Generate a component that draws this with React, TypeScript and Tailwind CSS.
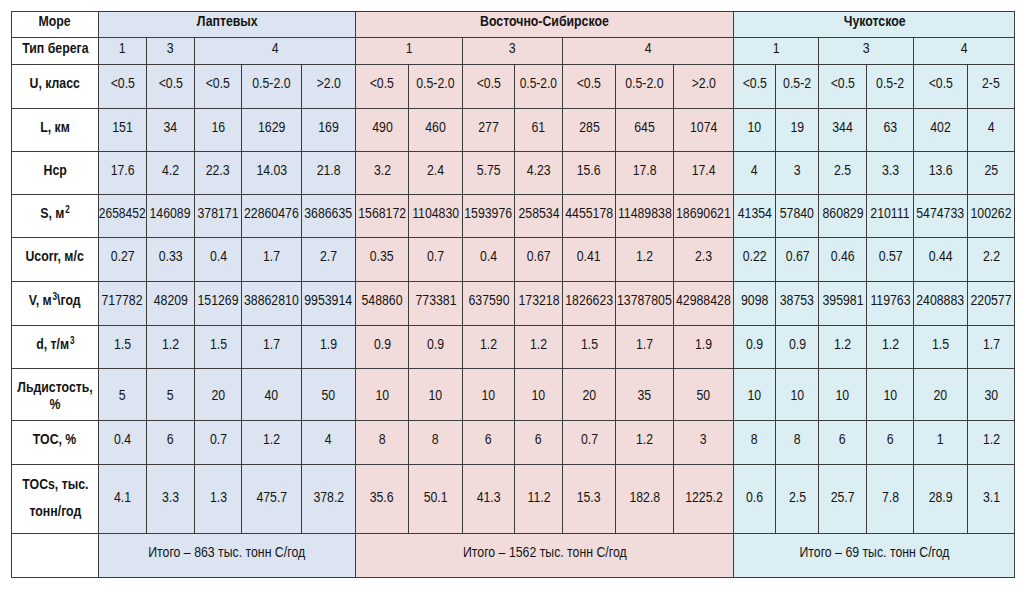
import React from "react";

type Sea = {
  name: string;
  bg: string;
  types: { label: string; span: number }[];
  widths: number[];
  total: string;
};

const seas: Sea[] = [
  {
    name: "Лаптевых",
    bg: "bg-[#dbe4f0]",
    types: [
      { label: "1", span: 1 },
      { label: "3", span: 1 },
      { label: "4", span: 3 },
    ],
    widths: [48, 48, 47, 60, 54],
    total: "Итого – 863 тыс. тонн С/год",
  },
  {
    name: "Восточно-Сибирское",
    bg: "bg-[#f2dcdb]",
    types: [
      { label: "1", span: 2 },
      { label: "3", span: 2 },
      { label: "4", span: 3 },
    ],
    widths: [53, 54, 52, 48, 53, 58, 60],
    total: "Итого – 1562 тыс. тонн С/год",
  },
  {
    name: "Чукотское",
    bg: "bg-[#daeef3]",
    types: [
      { label: "1", span: 2 },
      { label: "3", span: 2 },
      { label: "4", span: 2 },
    ],
    widths: [42, 43, 48, 47, 54, 47],
    total: "Итого – 69 тыс. тонн С/год",
  },
];

type Row = { label: React.ReactNode; h: string; pad?: string; values: string[][] };

const sup = "text-[10px] relative -top-[5px] ml-[1px]";

const rows: Row[] = [
  {
    label: "U, класс",
    h: "h-[44px]",
    values: [
      ["<0.5", "<0.5", "<0.5", "0.5-2.0", ">2.0"],
      ["<0.5", "0.5-2.0", "<0.5", "0.5-2.0", "<0.5", "0.5-2.0", ">2.0"],
      ["<0.5", "0.5-2", "<0.5", "0.5-2", "<0.5", "2-5"],
    ],
  },
  {
    label: "L, км",
    h: "h-[43px]",
    values: [
      ["151", "34", "16", "1629", "169"],
      ["490", "460", "277", "61", "285", "645", "1074"],
      ["10", "19", "344", "63", "402", "4"],
    ],
  },
  {
    label: "Hср",
    h: "h-[43px]",
    values: [
      ["17.6", "4.2", "22.3", "14.03", "21.8"],
      ["3.2", "2.4", "5.75", "4.23", "15.6", "17.8", "17.4"],
      ["4", "3", "2.5", "3.3", "13.6", "25"],
    ],
  },
  {
    label: (
      <>
        S, м<sup className={sup}>2</sup>
      </>
    ),
    h: "h-[43px]",
    values: [
      ["2658452", "146089", "378171", "22860476", "3686635"],
      ["1568172", "1104830", "1593976", "258534", "4455178", "11489838", "18690621"],
      ["41354", "57840", "860829", "210111", "5474733", "100262"],
    ],
  },
  {
    label: "Ucorr, м/с",
    h: "h-[44px]",
    values: [
      ["0.27", "0.33", "0.4", "1.7", "2.7"],
      ["0.35", "0.7", "0.4", "0.67", "0.41", "1.2", "2.3"],
      ["0.22", "0.67", "0.46", "0.57", "0.44", "2.2"],
    ],
  },
  {
    label: (
      <>
        V, м<sup className={sup}>3</sup>\год
      </>
    ),
    h: "h-[44px]",
    values: [
      ["717782", "48209", "151269", "38862810", "9953914"],
      ["548860", "773381", "637590", "173218", "1826623", "13787805", "42988428"],
      ["9098", "38753", "395981", "119763", "2408883", "220577"],
    ],
  },
  {
    label: (
      <>
        d, т/м<sup className={sup}>3</sup>
      </>
    ),
    h: "h-[43px]",
    values: [
      ["1.5", "1.2", "1.5", "1.7", "1.9"],
      ["0.9", "0.9", "1.2", "1.2", "1.5", "1.7", "1.9"],
      ["0.9", "0.9", "1.2", "1.2", "1.5", "1.7"],
    ],
  },
  {
    label: (
      <span className="block leading-[17px]">
        Льдистость,
        <br />%
      </span>
    ),
    h: "h-[52px]",
    pad: "pb-0",
    values: [
      ["5", "5", "20", "40", "50"],
      ["10", "10", "10", "10", "20", "35", "50"],
      ["10", "10", "10", "10", "20", "30"],
    ],
  },
  {
    label: "TOC, %",
    h: "h-[44px]",
    values: [
      ["0.4", "6", "0.7", "1.2", "4"],
      ["8", "8", "6", "6", "0.7", "1.2", "3"],
      ["8", "8", "6", "6", "1", "1.2"],
    ],
  },
  {
    label: (
      <span className="block leading-[27px]">
        TOCs, тыс.
        <br />
        тонн/год
      </span>
    ),
    h: "h-[69px]",
    pad: "pb-[5px]",
    values: [
      ["4.1", "3.3", "1.3", "475.7", "378.2"],
      ["35.6", "50.1", "41.3", "11.2", "15.3", "182.8", "1225.2"],
      ["0.6", "2.5", "25.7", "7.8", "28.9", "3.1"],
    ],
  },
];

const cell = "border border-[#3c3c3c] text-center align-middle p-0 whitespace-nowrap";

// Arial Narrow look: Liberation Sans squeezed horizontally, centred even when wider than the cell
function Narrow({ children, tight }: { children: React.ReactNode; tight?: boolean }) {
  return (
    <div className="flex justify-center">
      <span className={`shrink-0 inline-block origin-center ${tight ? "scale-x-[0.8]" : "scale-x-[0.82]"}`}>
        {children}
      </span>
    </div>
  );
}

const fits = (v: string, w: number) => v.length * 6.85 <= w - 2;

export default function App() {
  return (
    <div
      className="w-[1024px] h-[591px] bg-white pt-[11px] pl-[11px] text-[#141414] text-[15px] leading-[18px]"
      style={{ fontFamily: '"Liberation Sans", Arial, sans-serif' }}
    >
      <table className="table-fixed border-collapse w-[1003px]">
        <colgroup>
          <col className="w-[87px]" />
          {seas.map((s) =>
            s.widths.map((w, i) => <col key={s.name + i} style={{ width: w }} />)
          )}
        </colgroup>
        <tbody>
          <tr className="h-[26px]">
            <td className={`${cell} pb-[7px] font-bold bg-white`}>
              <Narrow>Море</Narrow>
            </td>
            {seas.map((s) => (
              <td key={s.name} colSpan={s.widths.length} className={`${cell} pb-[7px] font-bold ${s.bg}`}>
                <Narrow>{s.name}</Narrow>
              </td>
            ))}
          </tr>
          <tr className="h-[27px]">
            <td className={`${cell} pb-[7px] font-bold bg-white`}>
              <Narrow>Тип берега</Narrow>
            </td>
            {seas.map((s) =>
              s.types.map((t, i) => (
                <td key={s.name + i} colSpan={t.span} className={`${cell} pb-[7px] ${s.bg}`}>
                  <Narrow>{t.label}</Narrow>
                </td>
              ))
            )}
          </tr>
          {rows.map((r, ri) => {
            const pad = r.pad ?? "pb-[7px]";
            return (
              <tr key={ri} className={r.h}>
                <td className={`${cell} ${pad} font-bold bg-white`}>
                  <Narrow>{r.label}</Narrow>
                </td>
                {seas.map((s, si) =>
                  r.values[si].map((v, vi) => (
                    <td key={s.name + vi} className={`${cell} ${pad} ${s.bg}`}>
                      <Narrow tight={!fits(v, s.widths[vi])}>{v}</Narrow>
                    </td>
                  ))
                )}
              </tr>
            );
          })}
          <tr className="h-[44px]">
            <td className={`${cell} bg-white`}></td>
            {seas.map((s) => (
              <td key={s.name} colSpan={s.widths.length} className={`${cell} pb-[7px] ${s.bg}`}>
                <Narrow>{s.total}</Narrow>
              </td>
            ))}
          </tr>
        </tbody>
      </table>
    </div>
  );
}
